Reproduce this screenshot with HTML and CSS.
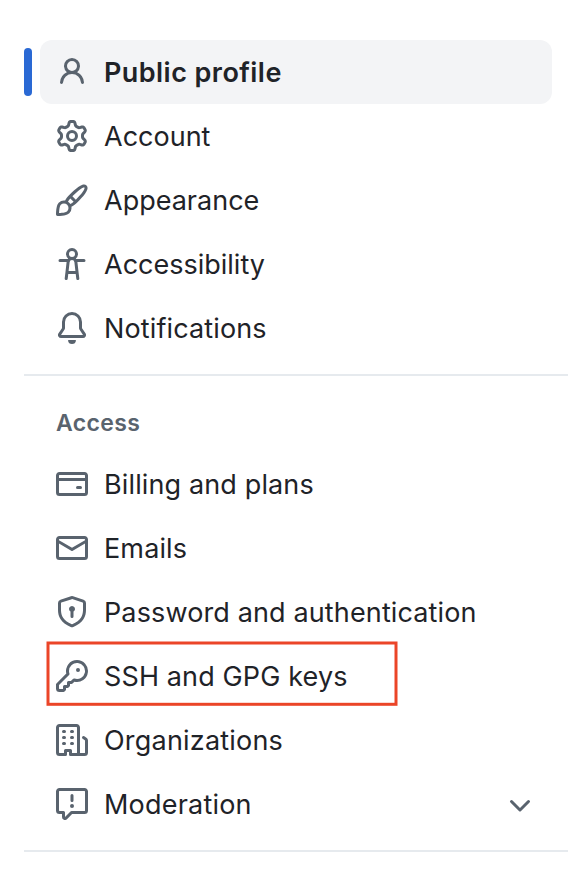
FILE: index.html
```html
<!DOCTYPE html>
<html lang="en">
<head>
<meta charset="utf-8">
<title>Settings</title>
<link rel="stylesheet" href="styles.css">
</head>
<body>
<nav class="sidebar">
  <ul class="nav-list">
    <li class="nav-item nav-item--current">
      <svg class="icon" viewBox="0 0 16 16"><path d="M10.561 8.073a6.005 6.005 0 0 1 3.432 5.142.75.75 0 1 1-1.498.07 4.5 4.5 0 0 0-8.99 0 .75.75 0 0 1-1.498-.07 6.004 6.004 0 0 1 3.431-5.142 3.999 3.999 0 1 1 5.123 0ZM10.5 5a2.5 2.5 0 1 0-5 0 2.5 2.5 0 0 0 5 0Z"/></svg>
      <span class="label">Public profile</span>
    </li>
    <li class="nav-item">
      <svg class="icon" viewBox="0 0 16 16"><path d="M8 0a8.2 8.2 0 0 1 .701.031C9.444.095 9.99.645 10.16 1.29l.288 1.107c.018.066.079.158.212.224.231.114.454.243.668.386.123.082.233.09.299.071l1.103-.303c.644-.176 1.392.021 1.82.63.27.385.506.792.704 1.218.315.675.111 1.422-.364 1.891l-.814.806c-.049.048-.098.147-.088.294.016.257.016.515 0 .772-.01.147.038.246.088.294l.814.806c.475.469.679 1.216.364 1.891a7.977 7.977 0 0 1-.704 1.217c-.428.61-1.176.807-1.82.63l-1.102-.302c-.067-.019-.177-.011-.3.071a5.909 5.909 0 0 1-.668.386c-.133.066-.194.158-.211.224l-.29 1.106c-.168.646-.715 1.196-1.458 1.26a8.006 8.006 0 0 1-1.402 0c-.743-.064-1.289-.614-1.458-1.26l-.289-1.106c-.018-.066-.079-.158-.212-.224a5.738 5.738 0 0 1-.668-.386c-.123-.082-.233-.09-.299-.071l-1.103.303c-.644.176-1.392-.021-1.82-.63a8.12 8.12 0 0 1-.704-1.218c-.315-.675-.111-1.422.363-1.891l.815-.806c.05-.048.098-.147.088-.294a6.214 6.214 0 0 1 0-.772c.01-.147-.038-.246-.088-.294l-.815-.806C.635 6.045.431 5.298.746 4.623a7.92 7.92 0 0 1 .704-1.217c.428-.61 1.176-.807 1.82-.63l1.102.302c.067.019.177.011.3-.071.214-.143.437-.272.668-.386.133-.066.194-.158.211-.224l.29-1.106C6.009.645 6.556.095 7.299.03 7.53.01 7.764 0 8 0Zm-.571 1.525c-.036.003-.108.036-.137.146l-.289 1.105c-.147.561-.549.967-.998 1.189-.173.086-.34.183-.5.29-.417.278-.97.423-1.529.27l-1.103-.303c-.109-.03-.175.016-.195.045-.22.312-.412.644-.573.99-.014.031-.021.11.059.19l.815.806c.411.406.562.957.53 1.456a4.709 4.709 0 0 0 0 .582c.032.499-.119 1.05-.53 1.456l-.815.806c-.081.08-.073.159-.059.19.162.346.353.677.573.989.02.03.085.076.195.046l1.102-.303c.56-.153 1.113-.008 1.53.27.161.107.328.204.501.29.447.222.85.629.997 1.189l.289 1.105c.029.109.101.143.137.146a6.6 6.6 0 0 0 1.142 0c.036-.003.108-.036.137-.146l.289-1.105c.147-.561.549-.967.998-1.189.173-.086.34-.183.5-.29.417-.278.97-.423 1.529-.27l1.103.303c.109.029.175-.016.195-.045.22-.313.411-.644.573-.99.014-.031.021-.11-.059-.19l-.815-.806c-.411-.406-.562-.957-.53-1.456a4.709 4.709 0 0 0 0-.582c-.032-.499.119-1.05.53-1.456l.815-.806c.081-.08.073-.159.059-.19a6.464 6.464 0 0 0-.573-.989c-.02-.03-.085-.076-.195-.046l-1.102.303c-.56.153-1.113.008-1.53-.27a4.44 4.44 0 0 0-.501-.29c-.447-.222-.85-.629-.997-1.189l-.289-1.105c-.029-.11-.101-.143-.137-.146a6.6 6.6 0 0 0-1.142 0ZM11 8a3 3 0 1 1-6 0 3 3 0 0 1 6 0ZM9.5 8a1.5 1.5 0 1 0-3.001.001A1.5 1.5 0 0 0 9.5 8Z"/></svg>
      <span class="label label--tight">Account</span>
    </li>
    <li class="nav-item">
      <svg class="icon" viewBox="0 0 16 16"><path d="M11.134 1.535c.7-.509 1.416-.942 2.076-1.155.649-.21 1.463-.267 2.069.34.603.601.568 1.411.368 2.07-.202.668-.624 1.39-1.125 2.096-1.011 1.424-2.496 2.987-3.775 4.249-1.098 1.084-2.132 1.839-3.04 2.3a3.744 3.744 0 0 1-1.055 3.217c-.431.431-1.065.691-1.657.861-.614.177-1.294.287-1.914.357A21.151 21.151 0 0 1 .797 16H.743l.007-.75H.749L.742 16a.75.75 0 0 1-.743-.742l.743-.008-.742.007v-.054a21.25 21.25 0 0 1 .13-2.284c.067-.647.187-1.287.358-1.914.17-.591.43-1.226.86-1.657a3.746 3.746 0 0 1 3.227-1.054c.466-.893 1.225-1.907 2.314-2.982 1.271-1.255 2.833-2.75 4.245-3.777ZM1.62 13.089c-.051.464-.086.929-.104 1.395.466-.018.932-.053 1.396-.104a10.511 10.511 0 0 0 1.668-.309c.526-.151.856-.325 1.011-.48a2.25 2.25 0 1 0-3.182-3.182c-.155.155-.329.485-.48 1.01a10.515 10.515 0 0 0-.309 1.67Zm10.396-10.34c-1.224.89-2.605 2.189-3.822 3.384l1.718 1.718c1.21-1.205 2.51-2.597 3.387-3.833.47-.662.78-1.227.912-1.662.134-.444.032-.551.009-.575h-.001V1.78c-.014-.014-.113-.113-.548.027-.432.14-.995.462-1.655.942Zm-4.832 7.266-.001.001a9.859 9.859 0 0 0 1.63-1.142L7.155 7.216a9.7 9.7 0 0 0-1.161 1.607c.482.302.889.71 1.19 1.192Z"/></svg>
      <span class="label label--tight">Appearance</span>
    </li>
    <li class="nav-item">
      <svg class="icon" viewBox="0 0 16 16"><path d="M9.923 5.302c.063.063.122.129.178.198H14A.75.75 0 0 1 14 7h-3.3l.578 5.163.362 2.997a.75.75 0 0 1-1.49.18L9.868 13H6.132l-.282 2.34a.75.75 0 0 1-1.49-.18l.362-2.997L5.3 7H2a.75.75 0 0 1 0-1.5h3.9a2.54 2.54 0 0 1 .176-.198 3 3 0 1 1 3.847 0ZM9.2 7.073h-.001a1.206 1.206 0 0 0-2.398 0L6.305 11.5h3.39ZM9.5 3a1.5 1.5 0 1 0-3.001.001A1.5 1.5 0 0 0 9.5 3Z"/></svg>
      <span class="label label--tight">Accessibility</span>
    </li>
    <li class="nav-item">
      <svg class="icon" viewBox="0 0 16 16"><path d="M8 16a2 2 0 0 0 1.985-1.75c.017-.137-.097-.25-.235-.25h-3.5c-.138 0-.252.113-.235.25A2 2 0 0 0 8 16ZM3 5a5 5 0 0 1 10 0v2.947c0 .05.015.098.042.139l1.703 2.555A1.519 1.519 0 0 1 13.482 13H2.518a1.516 1.516 0 0 1-1.263-2.36l1.703-2.554A.255.255 0 0 0 3 7.947Zm5-3.5A3.5 3.5 0 0 0 4.5 5v2.947c0 .346-.102.683-.294.97l-1.703 2.556a.017.017 0 0 0-.003.01l.001.006c0 .002.002.004.004.006l.006.004.007.001h10.964l.007-.001.006-.004.004-.006.001-.007a.017.017 0 0 0-.003-.01l-1.703-2.554a1.745 1.745 0 0 1-.294-.97V5A3.5 3.5 0 0 0 8 1.5Z"/></svg>
      <span class="label">Notifications</span>
    </li>
  </ul>
  <hr class="divider">
  <h2 class="group-title">Access</h2>
  <ul class="nav-list">
    <li class="nav-item">
      <svg class="icon" viewBox="0 0 16 16"><path d="M10.75 9a.75.75 0 0 0 0 1.5h1.5a.75.75 0 0 0 0-1.5h-1.5Z"/><path d="M0 3.75C0 2.784.784 2 1.75 2h12.5c.966 0 1.75.784 1.75 1.75v8.5A1.75 1.75 0 0 1 14.25 14H1.75A1.75 1.75 0 0 1 0 12.25ZM14.5 6.5h-13v5.75c0 .138.112.25.25.25h12.5a.25.25 0 0 0 .25-.25Zm0-2.75a.25.25 0 0 0-.25-.25H1.75a.25.25 0 0 0-.25.25V5h13Z"/></svg>
      <span class="label">Billing and plans</span>
    </li>
    <li class="nav-item">
      <svg class="icon" viewBox="0 0 16 16"><path d="M1.75 2h12.5c.966 0 1.75.784 1.75 1.75v8.5A1.75 1.75 0 0 1 14.25 14H1.75A1.75 1.75 0 0 1 0 12.25v-8.5C0 2.784.784 2 1.75 2ZM1.5 12.251c0 .138.112.25.25.25h12.5a.25.25 0 0 0 .25-.25V5.809L8.38 9.397a.75.75 0 0 1-.76 0L1.5 5.809v6.442Zm13-8.181v-.32a.25.25 0 0 0-.25-.25H1.75a.25.25 0 0 0-.25.25v.32L8 7.88Z"/></svg>
      <span class="label">Emails</span>
    </li>
    <li class="nav-item">
      <svg class="icon" viewBox="0 0 16 16"><path d="m8.533.133 5.25 1.68A1.75 1.75 0 0 1 15 3.48V7c0 1.566-.32 3.182-1.303 4.682-.983 1.498-2.585 2.813-5.032 3.855a1.697 1.697 0 0 1-1.33 0c-2.447-1.042-4.049-2.357-5.032-3.855C1.32 10.182 1 8.566 1 7V3.48a1.755 1.755 0 0 1 1.217-1.667l5.25-1.68a1.748 1.748 0 0 1 1.066 0Zm-.61 1.429.001.001-5.25 1.68a.251.251 0 0 0-.174.237V7c0 1.36.275 2.666 1.057 3.859.784 1.194 2.121 2.342 4.366 3.298a.196.196 0 0 0 .154 0c2.245-.957 3.582-2.103 4.366-3.297C13.225 9.666 13.5 8.358 13.5 7V3.48a.25.25 0 0 0-.174-.238l-5.25-1.68a.25.25 0 0 0-.153 0ZM9.5 6.5c0 .536-.286 1.032-.75 1.3v2.45a.75.75 0 0 1-1.5 0V7.8A1.5 1.5 0 1 1 9.5 6.5Z"/></svg>
      <span class="label">Password and authentication</span>
    </li>
    <li class="nav-item">
      <svg class="icon" viewBox="0 0 16 16"><path d="M10.5 0a5.499 5.499 0 1 1-1.288 10.848l-.932.932a.749.749 0 0 1-.53.22H7v.75a.749.749 0 0 1-.22.53l-.5.5a.749.749 0 0 1-.53.22H5v.75a.749.749 0 0 1-.22.53l-.5.5a.749.749 0 0 1-.53.22h-2A1.75 1.75 0 0 1 0 14.25v-2c0-.199.079-.389.22-.53l4.932-4.932A5.5 5.5 0 0 1 10.5 0Zm-4 5.5c-.001.431.069.86.205 1.269a.75.75 0 0 1-.181.768L1.5 12.56v1.69c0 .138.112.25.25.25h1.69l.06-.06v-1.19a.75.75 0 0 1 .75-.75h1.19l.06-.06v-1.19a.75.75 0 0 1 .75-.75h1.19l1.023-1.025a.75.75 0 0 1 .768-.18A4 4 0 1 0 6.5 5.5ZM11 6a1 1 0 1 1 0-2 1 1 0 0 1 0 2Z"/></svg>
      <span class="label">SSH and GPG keys</span>
      <svg class="highlight" viewBox="0 0 352 66"><rect x="2" y="2" width="348" height="61.3"/></svg>
    </li>
    <li class="nav-item">
      <svg class="icon" viewBox="0 0 16 16"><path d="M1.75 16A1.75 1.75 0 0 1 0 14.25V1.75C0 .784.784 0 1.75 0h8.5C11.216 0 12 .784 12 1.75v12.5c0 .085-.006.168-.018.25h2.268a.25.25 0 0 0 .25-.25V8.285a.25.25 0 0 0-.111-.208l-1.055-.703a.749.749 0 1 1 .832-1.248l1.055.703c.487.325.779.871.779 1.456v5.965A1.75 1.75 0 0 1 14.25 16h-3.5a.766.766 0 0 1-.197-.026c-.099.017-.2.026-.303.026h-3a.75.75 0 0 1-.75-.75V14h-1v1.25a.75.75 0 0 1-.75.75Zm-.25-1.75c0 .138.112.25.25.25H4v-1.25a.75.75 0 0 1 .75-.75h2.5a.75.75 0 0 1 .75.75v1.25h2.25a.25.25 0 0 0 .25-.25V1.75a.25.25 0 0 0-.25-.25h-8.5a.25.25 0 0 0-.25.25ZM3.75 6h.5a.75.75 0 0 1 0 1.5h-.5a.75.75 0 0 1 0-1.5ZM3 3.75A.75.75 0 0 1 3.75 3h.5a.75.75 0 0 1 0 1.5h-.5A.75.75 0 0 1 3 3.75Zm4 3A.75.75 0 0 1 7.75 6h.5a.75.75 0 0 1 0 1.5h-.5A.75.75 0 0 1 7 6.75ZM7.75 3h.5a.75.75 0 0 1 0 1.5h-.5a.75.75 0 0 1 0-1.5ZM3 9.75A.75.75 0 0 1 3.75 9h.5a.75.75 0 0 1 0 1.5h-.5A.75.75 0 0 1 3 9.75ZM7.75 9h.5a.75.75 0 0 1 0 1.5h-.5a.75.75 0 0 1 0-1.5Z"/></svg>
      <span class="label label--wide">Organizations</span>
    </li>
    <li class="nav-item">
      <svg class="icon" viewBox="0 0 16 16"><path d="M0 1.75C0 .784.784 0 1.75 0h12.5C15.216 0 16 .784 16 1.75v9.5A1.75 1.75 0 0 1 14.25 13H8.06l-2.573 2.573A1.458 1.458 0 0 1 3 14.543V13H1.75A1.75 1.75 0 0 1 0 11.25Zm1.75-.25a.25.25 0 0 0-.25.25v9.5c0 .138.112.25.25.25h2a.75.75 0 0 1 .75.75v2.19l2.72-2.72a.749.749 0 0 1 .53-.22h6.5a.25.25 0 0 0 .25-.25v-9.5a.25.25 0 0 0-.25-.25Zm7 2.25v2.5a.75.75 0 0 1-1.5 0v-2.5a.75.75 0 0 1 1.5 0ZM9 9a1 1 0 1 1-2 0 1 1 0 0 1 2 0Z"/></svg>
      <span class="label label--wide">Moderation</span>
      <svg class="icon chevron" viewBox="0 0 16 16"><path d="M12.78 5.22a.749.749 0 0 1 0 1.06l-4.25 4.25a.749.749 0 0 1-1.06 0L3.22 6.28a.749.749 0 1 1 1.06-1.06L8 8.939l3.72-3.719a.749.749 0 0 1 1.06 0Z"/></svg>
    </li>
  </ul>
  <hr class="divider">
</nav>
</body>
</html>
```
FILE: styles.css
```css
* { box-sizing: border-box; }
body {
  margin: 0;
  background: #fff;
  color: #1f2328;
  font-family: Inter, "Liberation Sans", sans-serif;
  font-size: 27px;
}
.sidebar {
  padding: 40px 8px 0 24px;
}
.nav-list {
  list-style: none;
  margin: 0;
  padding: 0 16px;
}
.nav-item {
  position: relative;
  display: flex;
  align-items: center;
  gap: 16px;
  height: 64px;
  padding: 0 16px;
  border-radius: 12px;
}
.nav-item--current {
  background: #f3f4f6;
  font-weight: 600;
}
.nav-item--current::before {
  content: "";
  position: absolute;
  left: -16px;
  top: 8px;
  width: 8px;
  height: 48px;
  border-radius: 4px;
  background: #2a69d4;
}
.icon {
  flex: none;
  width: 32px;
  height: 32px;
  fill: #59636e;
}
.label {
  padding-top: 2px;
  line-height: 40px;
  letter-spacing: 0.13px;
  white-space: nowrap;
}
.label--tight {
  letter-spacing: 0;
}
.label--wide {
  letter-spacing: 0.2px;
}
.nav-item--current .label {
  letter-spacing: 0.44px;
}
.chevron {
  margin: 3px 0 0 auto;
}
.divider {
  height: 2px;
  margin: 14px 0 0;
  border: 0;
  background: #e6eaee;
}
.group-title {
  margin: 0;
  padding: 29px 32px 11px;
  color: #59636e;
  font-size: 23px;
  font-weight: 600;
  letter-spacing: 0.35px;
  line-height: 36px;
}
.highlight {
  position: absolute;
  left: 6px;
  top: -3px;
  width: 352px;
  height: 66px;
  fill: none;
  stroke: #eb4528;
  stroke-width: 3;
}
```
